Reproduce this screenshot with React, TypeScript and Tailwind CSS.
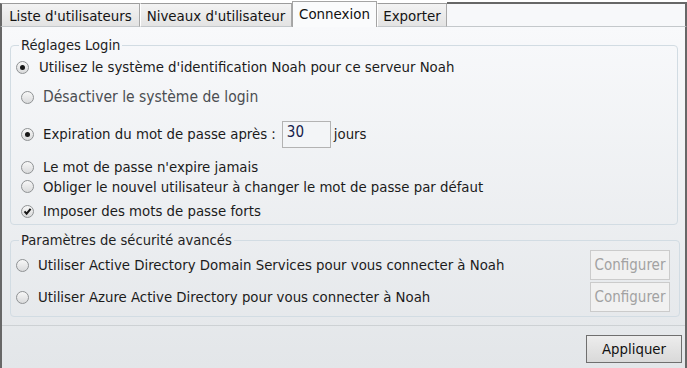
import React from "react";

const font = { fontFamily: '"DejaVu Sans Condensed", "DejaVu Sans", sans-serif' };

function Radio({ checked = false }: { checked?: boolean }) {
  return (
    <span className="inline-flex h-[13px] w-[13px] shrink-0 items-center justify-center rounded-full border border-[#8f9294] bg-gradient-to-b from-[#f7f7f7] to-[#d9dadb]">
      {checked && <span className="h-[5px] w-[5px] rounded-full bg-[#161616]" />}
    </span>
  );
}

function CheckCircle() {
  return (
    <span className="inline-flex h-[13px] w-[13px] shrink-0 items-center justify-center rounded-full border border-[#8f9294] bg-gradient-to-b from-[#f7f7f7] to-[#d9dadb]">
      <svg width="9" height="9" viewBox="0 0 9 9">
        <path d="M1.5 4.4 L3.6 6.7 L7.6 1.9" fill="none" stroke="#161616" strokeWidth="2" />
      </svg>
    </span>
  );
}

function Tab({ label, first = false, w }: { label: string; first?: boolean; w: string }) {
  return (
    <div
      className={
        "flex h-[24px] shrink-0 items-center justify-center border-b border-t border-r border-b-[#c4c8cb] border-t-[#9c9c9c] border-r-[#a8a8a8] bg-gradient-to-b from-[#f3f3f3] to-[#e3e3e3] pt-[1px] text-[14.9px] text-[#141414] " +
        w +
        " " +
        (first ? "border-l-2 border-l-[#676767]" : "border-l border-l-[#ffffff]")
      }
    >
      {label}
    </div>
  );
}

export default function App() {
  return (
    <div className="flex h-[368px] w-[687px] flex-col overflow-hidden bg-white text-[14.8px] leading-[20px] text-[#1b1b1b]" style={font}>
      <div className="flex h-[27px] items-end">
        <Tab label="Liste d'utilisateurs" first w="w-[140px]" />
        <Tab label="Niveaux d'utilisateur" w="w-[152px]" />
        <div className="relative z-10 flex h-[26px] w-[85px] shrink-0 items-center justify-center border-x border-t border-[#a4a4a4] bg-[#fafbfc] pb-[2px] text-[14.9px] text-[#101010]">
          Connexion
        </div>
        <Tab label="Exporter" w="w-[70px]" />
        <div className="h-[25px] flex-1 border-b border-r-2 border-t-2 border-b-[#c4c8cb] border-r-[#676767] border-t-[#676767] bg-[#f7f8fa]" />
      </div>
      <div className="flex flex-1 flex-col border-x-2 border-[#676767] bg-gradient-to-b from-[#f8f9fb] to-[#e3e6e9] pt-[10px]">
        <fieldset className="ml-[8px] mr-[7px] rounded-[4px] border border-[#d2dce3] pb-[3px] pl-[5px] pr-[6px] pt-[4px]">
          <legend className="ml-[3px] px-[2px] text-[14.6px] leading-[16px] text-[#1e1e1e]">Réglages Login</legend>
          <div className="flex flex-col">
            <div className="flex h-[20px] items-center gap-[10px]">
              <Radio checked />
              <span>Utilisez le système d'identification Noah pour ce serveur Noah</span>
            </div>
            <div className="ml-[5px] mt-[9px] flex h-[22px] items-center gap-[9px] text-[15.5px] text-[#4b4e52]">
              <Radio />
              <span>Désactiver le système de login</span>
            </div>
            <div className="ml-[5px] mt-[12px] flex h-[28px] items-center gap-[9px]">
              <Radio checked />
              <span>Expiration du mot de passe après :</span>
              <span className="-ml-[3px] h-[27px] w-[49px] border border-[#b3b3b3] bg-[#f3f5f7] pl-[4px] text-[15px] leading-[20px] text-[#15204a]">30</span>
              <span className="-ml-[6px]">jours</span>
            </div>
            <div className="ml-[5px] mt-[9px] flex h-[20px] items-center gap-[9px]">
              <Radio />
              <span>Le mot de passe n'expire jamais</span>
            </div>
            <div className="ml-[5px] flex h-[19px] items-center gap-[9px]">
              <Radio />
              <span>Obliger le nouvel utilisateur à changer le mot de passe par défaut</span>
            </div>
            <div className="ml-[5px] mt-[5px] flex h-[20px] items-center gap-[9px]">
              <CheckCircle />
              <span>Imposer des mots de passe forts</span>
            </div>
          </div>
        </fieldset>
        <fieldset className="ml-[8px] mr-[5px] mt-[7px] rounded-[4px] border border-[#d2dce3] pb-[4px] pl-[5px] pr-[9px] pt-[2px]">
          <legend className="ml-[3px] px-[2px] text-[14.6px] leading-[16px] text-[#1e1e1e]">Paramètres de sécurité avancés</legend>
          <div className="flex flex-col gap-[2px]">
            <div className="flex h-[30px] items-center gap-[9px]">
              <Radio />
              <span className="flex-1">Utiliser Active Directory Domain Services pour vous connecter à Noah</span>
              <span className="flex h-[30px] w-[80px] items-center justify-center border border-[#cbcbcb] bg-[#f1f1f1] text-[15px] text-[#a2a2a2]">Configurer</span>
            </div>
            <div className="flex h-[30px] items-center gap-[9px]">
              <Radio />
              <span className="flex-1">Utiliser Azure Active Directory pour vous connecter à Noah</span>
              <span className="flex h-[30px] w-[80px] items-center justify-center border border-[#cbcbcb] bg-[#f1f1f1] text-[15px] text-[#a2a2a2]">Configurer</span>
            </div>
          </div>
        </fieldset>
        <div className="mt-[8px] border-t border-[#cdd1d4]" />
        <div className="mt-[9px] flex justify-end pr-[3px]">
          <div className="flex h-[28px] w-[96px] items-center justify-center border border-[#6f6f6f] bg-gradient-to-b from-[#ededed] to-[#d9d9d9] text-[14.8px] text-[#111]">
            Appliquer
          </div>
        </div>
      </div>
    </div>
  );
}
